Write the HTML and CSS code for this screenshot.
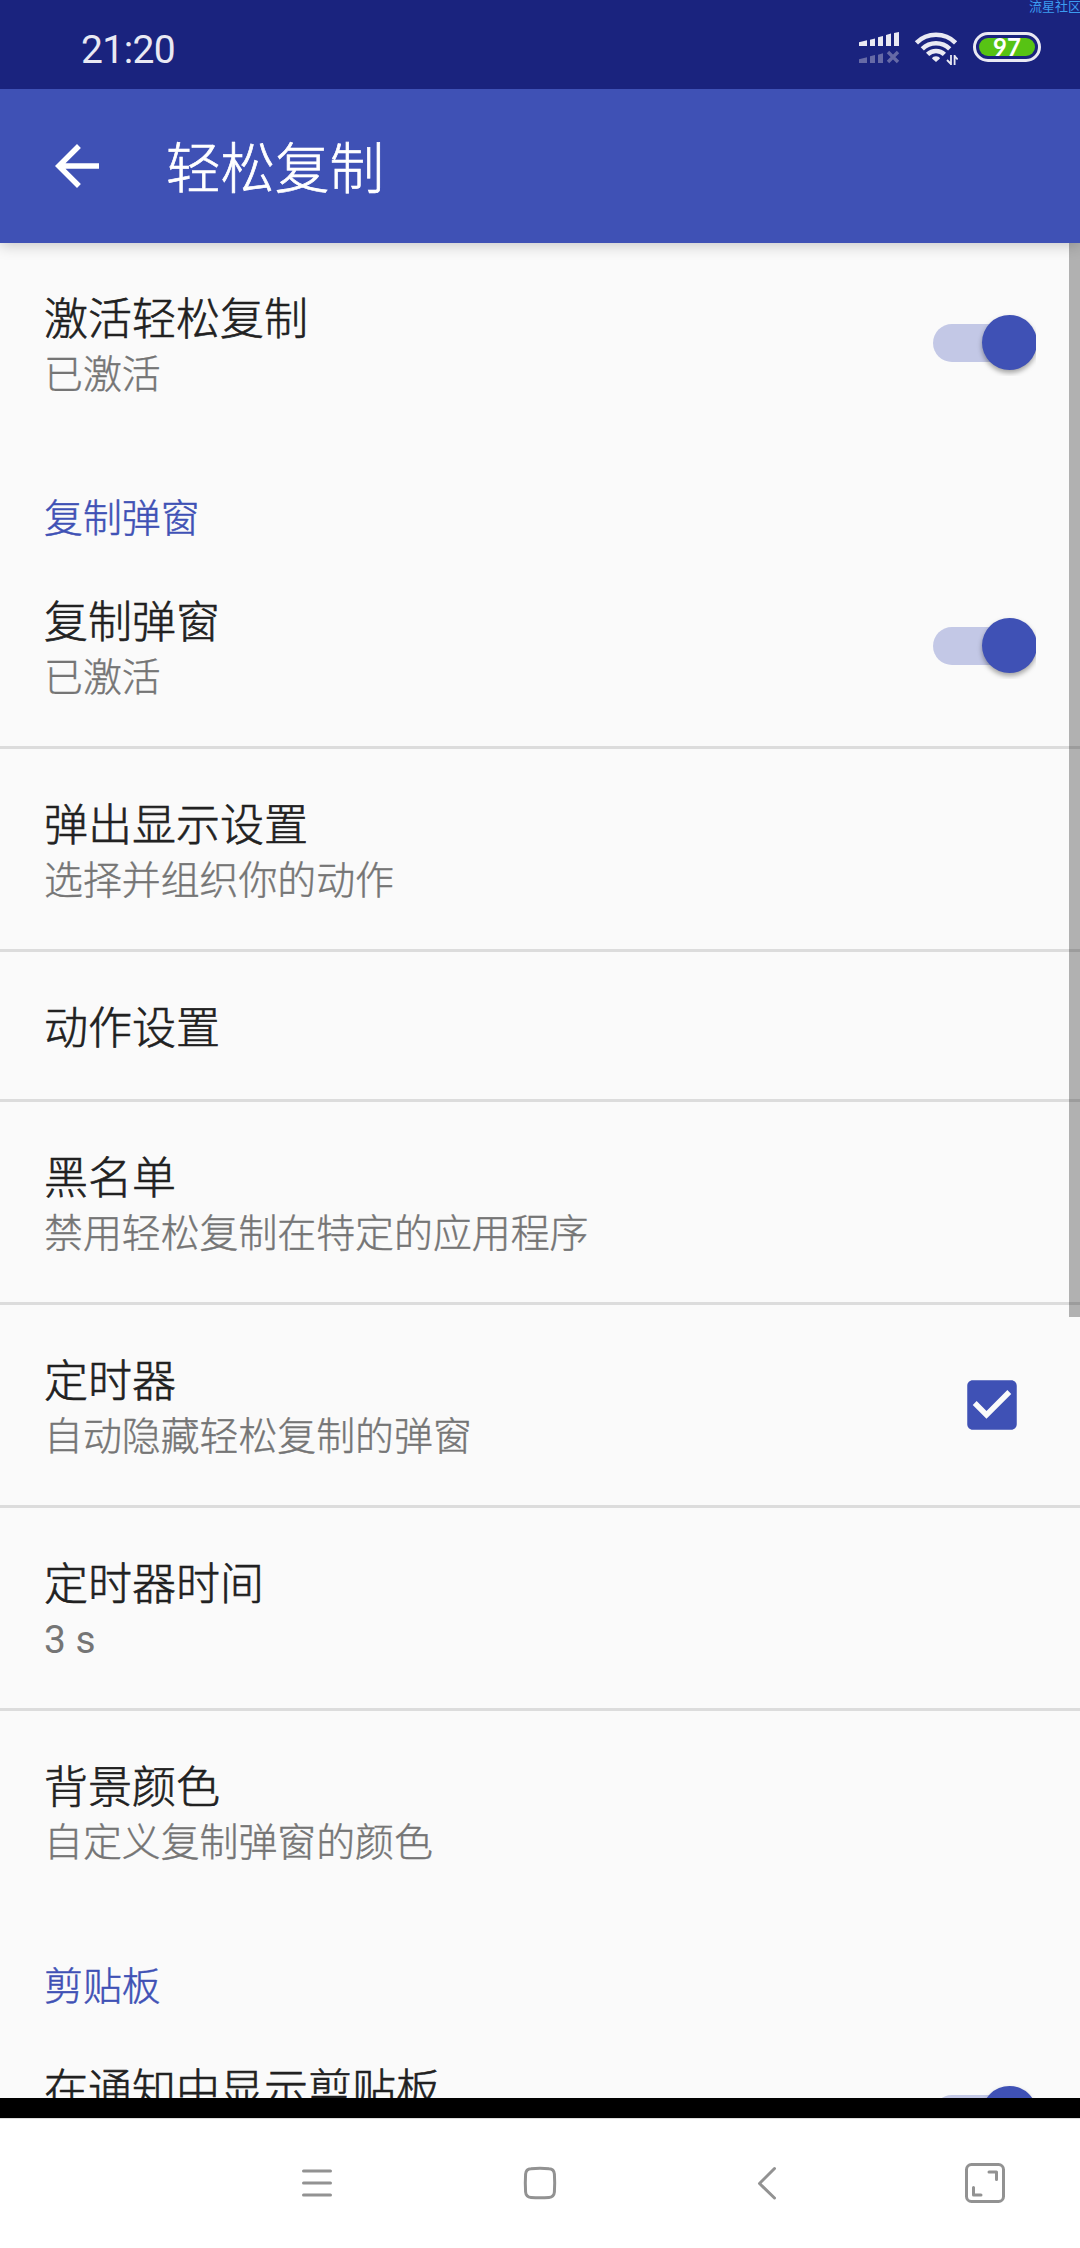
FILE: index.html
```html
<!DOCTYPE html>
<html lang="zh-CN">
<head>
<meta charset="utf-8">
<title>轻松复制</title>
<link rel="stylesheet" href="styles.css">
</head>
<body>
<div class="screen">
  <header class="status">
    <span class="clock">21:20</span>
    <div class="indicators">
      <svg class="signal" width="42" height="34" viewBox="858 31 42 34">
        <g fill="#e9e9f3">
          <path d="M859 42.3l8-2V46h-8zM870 39.8l5-1.4V46h-5zM878 37.3l5-1.4V46h-5zM886 35l5-1.4V46h-5zM894 33l5-1V46h-5z"/>
        </g>
        <path fill="#666aa6" d="M859 59.3l8-2V63h-8zM870 56.3l5-1.4V63h-5zM878 54.8l5-1.6V63h-5z"/>
        <path d="M888 52l10 10M898 52l-10 10" stroke="#666aa6" stroke-width="3.4"/>
      </svg>
      <svg class="wifi" width="44" height="36" viewBox="914 31 44 36" fill="none" stroke="#e9e9f3" stroke-width="4.6">
        <path d="M916.4 42.8a28 28 0 0 1 39.2 0M922.3 48.8a19.6 19.6 0 0 1 27.4 0M927.6 54.4a12 12 0 0 1 16.8 0"/>
        <path d="M936 62l-4-3.6c1-3 7-3 8 0z" fill="#e9e9f3" stroke="none"/>
        <path d="M951 55v10M954.6 65V55M951 64l-4-4M954.6 56l3 3.500" stroke-width="1.800"/>
      </svg>
      <span class="battery"><span class="charge">97</span></span>
    </div>
    <span class="watermark">流星社区</span>
  </header>

  <div class="appbar">
    <svg class="back" width="66" height="66" viewBox="0 0 24 24" fill="#fff"><path d="M20 11H7.830l5.590-5.590L12 4l-8 8 8 8 1.410-1.410L7.830 13H20z"/></svg>
    <h1 class="heading">轻松复制</h1>
  </div>

  <main class="list">
    <div class="item last">
      <div class="text"><div class="title">激活轻松复制</div><div class="summary">已激活</div></div>
      <span class="switch"><span class="track"></span><span class="thumb"></span></span>
    </div>
    <h2 class="category">复制弹窗</h2>
    <div class="item">
      <div class="text"><div class="title">复制弹窗</div><div class="summary">已激活</div></div>
      <span class="switch"><span class="track"></span><span class="thumb"></span></span>
    </div>
    <div class="item">
      <div class="text"><div class="title">弹出显示设置</div><div class="summary">选择并组织你的动作</div></div>
    </div>
    <div class="item single">
      <div class="text"><div class="title">动作设置</div></div>
    </div>
    <div class="item">
      <div class="text"><div class="title">黑名单</div><div class="summary">禁用轻松复制在特定的应用程序</div></div>
    </div>
    <div class="item">
      <div class="text"><div class="title">定时器</div><div class="summary">自动隐藏轻松复制的弹窗</div></div>
      <svg class="checkbox" width="66" height="66" viewBox="0 0 24 24" fill="#3f51b5"><path d="M19 3H5c-1.110 0-2 .9-2 2v14c0 1.100.890 2 2 2h14c1.110 0 2-.9 2-2V5c0-1.100-.890-2-2-2zm-9 14l-5-5 1.410-1.410L10 14.170l7.590-7.590L19 8l-9 9z"/></svg>
    </div>
    <div class="item">
      <div class="text"><div class="title">定时器时间</div><div class="summary latin">3 s</div></div>
    </div>
    <div class="item last">
      <div class="text"><div class="title">背景颜色</div><div class="summary">自定义复制弹窗的颜色</div></div>
    </div>
    <h2 class="category">剪贴板</h2>
    <div class="item">
      <div class="text"><div class="title">在通知中显示剪贴板</div></div>
      <span class="switch"><span class="track"></span><span class="thumb"></span></span>
    </div>
    <div class="scrollbar"></div>
  </main>

  <div class="strip"></div>
  <nav class="nav">
    <svg width="42" height="42" viewBox="0 0 42 42"><path d="M7.500 9h27M7.500 21h27M7.500 33h27"/></svg>
    <svg width="42" height="42" viewBox="0 0 42 42"><path d="M12 6.700Q21 5.700 30 6.700Q35 7 35.400 12Q36 21 35.400 30Q35 35 30 35.400Q21 36.200 12 35.400Q7 35 6.600 30Q6 21 6.600 12Q7 7 12 6.700Z"/></svg>
    <svg width="42" height="42" viewBox="0 0 42 42"><path d="M32.500 6.500L17.500 21.500L32.500 36"/></svg>
    <svg class="expand" width="42" height="42" viewBox="0 0 42 42"><rect x="2.500" y="2.500" width="37" height="37" rx="5"/><path d="M25 10h7.500v7.500M9.500 25.500V33H17"/></svg>
  </nav>
</div>
</body>
</html>
```

FILE: styles.css
```css
* { box-sizing: border-box; }

body {
  margin: 0;
  background: #fff;
  font-family: "Noto Sans CJK SC", sans-serif;
  font-weight: 300;
}

.screen {
  display: flex;
  flex-direction: column;
  width: 1080px;
  height: 2248px;
  overflow: hidden;
}

.status {
  position: relative;
  z-index: 2;
  display: flex;
  flex: none;
  justify-content: space-between;
  height: 89px;
  padding: 0 39px 0 81px;
  background: #1a237e;
  overflow: hidden;
}

.clock {
  padding-top: 25px;
  color: #e9e9f3;
  font: 400 39px/50px Roboto, sans-serif;
  letter-spacing: -.6px;
}

.indicators {
  display: flex;
  align-items: flex-start;
  padding-top: 31px;
}

.wifi { margin: 0 15px 0 14px; }

.battery {
  display: flex;
  width: 68px;
  height: 30px;
  margin-top: 1px;
  padding: 3px;
  border: 3px solid #e9e9f3;
  border-radius: 15px;
}

.charge {
  flex: 1;
  border-radius: 9px;
  background: #57c314;
  color: #fff;
  font: 700 24px/18px Lato, sans-serif;
  text-align: center;
}

.watermark {
  position: absolute;
  top: -3px;
  left: 1029px;
  color: #3c9cf0;
  font-size: 13px;
  font-weight: 400;
  line-height: 18px;
  white-space: nowrap;
}

.appbar {
  position: relative;
  z-index: 1;
  display: flex;
  flex: none;
  align-items: center;
  height: 154px;
  padding-left: 44px;
  background: #3f51b5;
  box-shadow: 0 2px 14px rgba(0, 0, 0, .22);
}

.heading {
  margin: 0 0 2px 56px;
  color: #fff;
  font-size: 54.5px;
  font-weight: 300;
  line-height: 70px;
  -webkit-text-stroke: .7px;
}

.list {
  position: relative;
  height: 1855px;
  flex: none;
  background: #fafafa;
  overflow: hidden;
}

.item {
  display: flex;
  justify-content: space-between;
  height: 203px;
  padding: 0 44px;
  border-bottom: 3px solid #dcdcdc;
}

.item.last {
  height: 200px;
  border-bottom: 0;
}

.item.single { height: 150px; }

.text { padding-top: 46px; }

.title {
  color: #212121;
  font-size: 44px;
  line-height: 54px;
  -webkit-text-stroke: .6px;
}

.summary {
  margin-top: 6px;
  color: #757575;
  font-size: 38.9px;
  line-height: 45px;
  -webkit-text-stroke: .4px;
}

.latin {
  padding-top: 3px;
  font-family: Roboto, sans-serif;
  font-weight: 400;
  -webkit-text-stroke: 0;
}

.category {
  height: 103px;
  margin: 0;
  padding: 50px 44px 0;
  color: #3f51b5;
  font-size: 38.9px;
  font-weight: 300;
  line-height: 45px;
  -webkit-text-stroke: .5px;
}

.switch {
  position: relative;
  align-self: center;
  width: 103px;
  height: 66px;
  overflow: hidden;
}

.track {
  display: block;
  width: 92px;
  height: 38px;
  margin: 14px 0 0;
  border-radius: 19px;
  background: #c3c8e6;
}

.thumb {
  position: absolute;
  top: 5px;
  left: 48.5px;
  width: 55px;
  height: 55px;
  border-radius: 50%;
  background: #3f51b5;
  box-shadow: 0 3px 5px rgba(0, 0, 0, .35);
}

.checkbox {
  align-self: center;
  margin-right: 11px;
}

.scrollbar {
  position: absolute;
  top: 0;
  right: 0;
  width: 11px;
  height: 1074px;
  background: rgba(0, 0, 0, .29);
}

.strip {
  flex: none;
  height: 21px;
  background: #000;
  border-bottom: 1px solid #ddd;
}

.nav {
  display: grid;
  flex: 1;
  grid-template-columns: 42px 42px 42px 42px;
  column-gap: 181px;
  align-items: start;
  padding: 43px 0 0 296px;
}

.nav svg {
  fill: none;
  stroke: #929292;
  stroke-width: 3;
  stroke-linecap: round;
  stroke-linejoin: round;
}

.nav .expand { margin-left: -1px; }
```
